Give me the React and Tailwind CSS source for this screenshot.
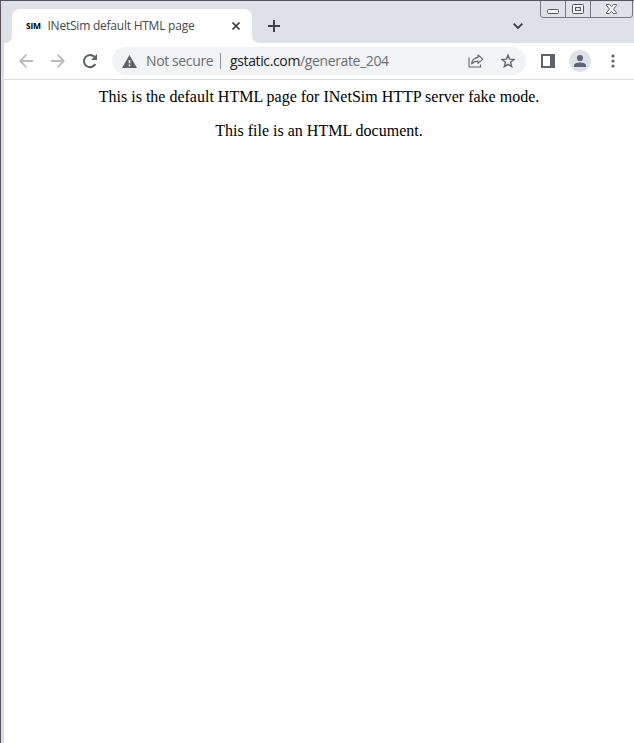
function WindowControls() {
  return (
    <svg className="absolute right-0 top-0" width="94" height="18" viewBox="0 0 94 18" fill="none">
      <path d="M.5 0V14Q.5 16.500 3 16.500H90Q92.500 16.500 92.500 14V0" fill="#e1e2e7" stroke="#77787e" />
      <path d="M25.500 0V16M50.500 0V16" stroke="#77787e" />
      <rect x="7.500" y="8.500" width="11" height="4" rx="1" fill="#f5f5f7" stroke="#55565c" />
      <rect x="32.500" y="3.500" width="11" height="9" rx="1" fill="#f5f5f7" stroke="#55565c" />
      <rect x="35.500" y="6.500" width="5" height="3" fill="#e2e3e8" stroke="#55565c" />
      <path d="M66.500 3.500H69.500L71.500 5.500L73.500 3.500H76.500V4.500L73.500 8L76.500 11.500V12.500H73.500L71.500 10.500L69.500 12.500H66.500V11.500L69.500 8L66.500 4.500Z" fill="#f5f5f7" stroke="#606167" />
    </svg>
  );
}

function Tab() {
  return (
    <div className="relative mt-2 ml-2 flex h-[34px] w-[240px] items-center rounded-t-lg bg-white">
      <svg className="absolute -left-2 bottom-0" width="8" height="8" viewBox="0 0 8 8"><path d="M8 0V8H0Q8 8 8 0" fill="#fff" /></svg>
      <svg className="absolute -right-2 bottom-0" width="8" height="8" viewBox="0 0 8 8"><path d="M0 0V8H8Q0 8 0 0" fill="#fff" /></svg>
      <span className="ml-[14px] w-[21.500px] font-['Open_Sans',sans-serif] text-[8.500px] leading-none font-bold tracking-[-0.300px] text-black">SIM</span>
      <span className="flex-1 whitespace-nowrap text-[12px] leading-4 tracking-[-0.230px] text-[#45484c]">INetSim default HTML page</span>
      <svg className="mr-3" width="8" height="8" viewBox="0 0 8 8"><path d="M.5.500 7.500 7.500M7.500.500.500 7.500" stroke="#3f4246" strokeWidth="1.600" /></svg>
    </div>
  );
}

function Toolbar() {
  return (
    <div className="flex h-[37px] shrink-0 items-center border-b border-[#d9dadc] bg-white">
      <svg className="ml-[15px]" width="14" height="14" viewBox="0 0 14 14" fill="none" stroke="#babcbe" strokeWidth="1.800"><path d="M14 7H1.500M7.300.700 1.200 7 7.300 13.300" /></svg>
      <svg className="ml-[18px]" width="14" height="14" viewBox="0 0 14 14" fill="none" stroke="#babcbe" strokeWidth="1.800"><path d="M0 7H12.500M6.700.700 12.800 7 6.700 13.300" /></svg>
      <svg className="ml-[17px]" width="16" height="16" viewBox="0 0 16 16"><path d="M13.400 11A6.100 6.100 0 1 1 12.500 3.800" fill="none" stroke="#5f6368" strokeWidth="2" /><path d="M15 1V7H9Z" fill="#5f6368" /></svg>
      <div className="ml-[14px] flex h-7 w-[414px] items-center rounded-full bg-[#f1f3f4] text-[14px] leading-5 text-[#6b6e72]">
        <svg className="ml-[10px]" width="15" height="13" viewBox="0 0 15 13"><path d="M7.500 0 15 13H0Z" fill="#5f6368" /><path d="M7.500 5V8.300M7.500 9.500V11.200" stroke="#fff" strokeWidth="1.500" /></svg>
        <span className="ml-[9px] w-[74px] whitespace-nowrap tracking-[-0.380px]">Not secure</span>
        <span className="h-4 w-px bg-[#8f9296]" />
        <span className="ml-[9px] flex-1 whitespace-nowrap tracking-[-0.370px]"><span className="text-[#202124]">gstatic.com</span>/generate_204</span>
        <svg className="mr-[17px]" width="16" height="14" viewBox="0 0 16 14" fill="none" stroke="#5f6368" strokeWidth="1.100"><path d="M1 3.500V13H12.500V10.500" /><path d="M10 1 14.800 5.200 10 9.400V7.100C7 7 5.200 7.900 3.600 9.800 4 6.200 6.200 3.900 10 3.400Z" strokeLinejoin="round" /></svg>
        <svg className="mr-[11px]" width="14" height="14" viewBox="0 0 14 14"><path d="M7 1.200 8.600 5.200 13 5.500 9.600 8.300 10.700 12.600 7 10.300 3.300 12.600 4.400 8.300 1 5.500 5.400 5.200Z" fill="none" stroke="#5f6368" strokeWidth="1.400" /></svg>
      </div>
      <svg className="ml-[15px]" width="14" height="14" viewBox="0 0 14 14"><rect x="1" y="1" width="12" height="12" fill="#fff" stroke="#5f6368" strokeWidth="2" /><path d="M9 0H14V14H9Z" fill="#5f6368" /></svg>
      <svg className="ml-[14px]" width="22" height="22" viewBox="0 0 22 22"><circle cx="11" cy="11" r="11" fill="#dee1e6" /><circle cx="11" cy="8" r="3.100" fill="#5b6376" /><path d="M5 17V15.500C5 13.500 8 12.500 11 12.500S17 13.500 17 15.500V17Z" fill="#5b6376" /></svg>
      <svg className="ml-[19.500px]" width="4" height="14" viewBox="0 0 4 14" fill="#5f6368"><circle cx="2" cy="2" r="1.600" /><circle cx="2" cy="7" r="1.600" /><circle cx="2" cy="12" r="1.600" /></svg>
    </div>
  );
}

export default function App() {
  return (
    <div className="flex h-[743px] w-[634px] overflow-hidden border-t border-l border-[#56535a] bg-[#dddee1] pl-[3px] font-['Open_Sans','Noto_Sans',sans-serif]">
      <div className="flex flex-1 flex-col bg-white">
        <header className="relative flex h-[42px] shrink-0 bg-[#dee1e6]">
          <Tab />
          <svg className="mt-[19px] ml-4" width="12" height="12" viewBox="0 0 12 12"><path d="M6 0V12M0 6H12" stroke="#3f4246" strokeWidth="2" /></svg>
          <svg className="mt-[22px] ml-[233px]" width="10" height="6" viewBox="0 0 10 6"><path d="M.700.700 5 5 9.300.700" fill="none" stroke="#3f4246" strokeWidth="1.900" /></svg>
          <WindowControls />
        </header>
        <Toolbar />
        <main className="pt-2 text-center font-['Liberation_Serif',serif] text-[16px] leading-[18px] text-black">
          <p>This is the default HTML page for INetSim HTTP server fake mode.</p>
          <p className="mt-4">This file is an HTML document.</p>
        </main>
      </div>
    </div>
  );
}
